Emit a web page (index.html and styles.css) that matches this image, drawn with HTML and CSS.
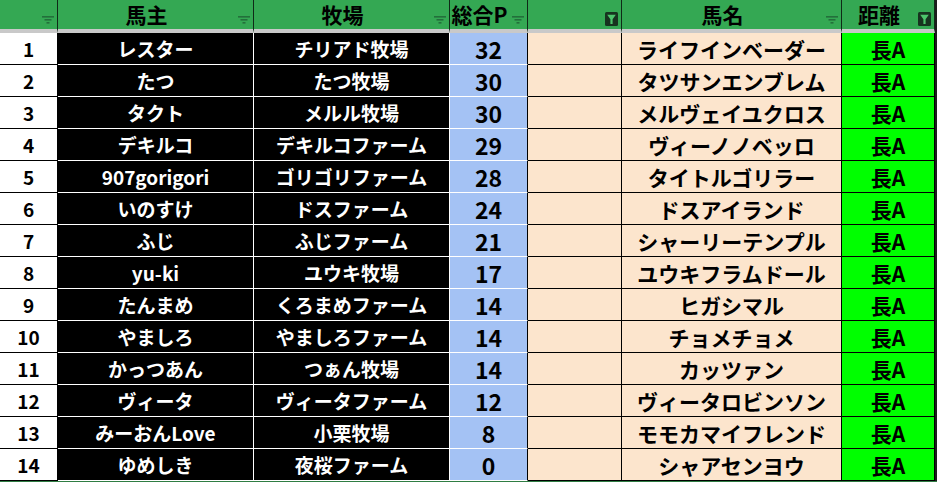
FILE: index.html
```html
<!DOCTYPE html>
<html lang="ja">
<head>
<meta charset="utf-8">
<title>馬主一覧</title>
<link rel="stylesheet" href="styles.css">
</head>
<body>
<div class="sheet">
  <div class="row head">
    <div class="hc c-no"><span class="ht"></span><svg class="fi" viewBox="0 0 12 8"><rect x="0" y="0" width="12" height="1.6"/><rect x="2.5" y="3" width="7" height="1.6"/><rect x="4.5" y="6" width="3" height="1.6"/></svg></div>
    <div class="hc c-owner"><span class="ht">馬主</span><svg class="fi" viewBox="0 0 12 8"><rect x="0" y="0" width="12" height="1.6"/><rect x="2.5" y="3" width="7" height="1.6"/><rect x="4.5" y="6" width="3" height="1.6"/></svg></div>
    <div class="hc c-farm"><span class="ht">牧場</span><svg class="fi" viewBox="0 0 12 8"><rect x="0" y="0" width="12" height="1.6"/><rect x="2.5" y="3" width="7" height="1.6"/><rect x="4.5" y="6" width="3" height="1.6"/></svg></div>
    <div class="hc c-pt"><span class="ht">総合P</span><svg class="fi" viewBox="0 0 12 8"><rect x="0" y="0" width="12" height="1.6"/><rect x="2.5" y="3" width="7" height="1.6"/><rect x="4.5" y="6" width="3" height="1.6"/></svg></div>
    <div class="hc c-blank"><span class="ht"></span><svg class="fa" viewBox="0 0 13 14"><rect width="13" height="14" rx="1.5"/><path d="M2.2 2.8h8.6l-3.2 4.4v4.8h-2.2v-4.8z"/></svg></div>
    <div class="hc c-horse"><span class="ht">馬名</span><svg class="fi" viewBox="0 0 12 8"><rect x="0" y="0" width="12" height="1.6"/><rect x="2.5" y="3" width="7" height="1.6"/><rect x="4.5" y="6" width="3" height="1.6"/></svg></div>
    <div class="hc c-dist"><span class="ht">距離</span><svg class="fa" viewBox="0 0 13 14"><rect width="13" height="14" rx="1.5"/><path d="M2.2 2.8h8.6l-3.2 4.4v4.8h-2.2v-4.8z"/></svg></div>
  </div>

  <div class="row"><div class="c c-no">1</div><div class="c c-owner">レスター</div><div class="c c-farm">チリアド牧場</div><div class="c c-pt">32</div><div class="c c-blank"></div><div class="c c-horse">ライフインベーダー</div><div class="c c-dist">長A</div></div>
  <div class="row"><div class="c c-no">2</div><div class="c c-owner">たつ</div><div class="c c-farm">たつ牧場</div><div class="c c-pt">30</div><div class="c c-blank"></div><div class="c c-horse">タツサンエンブレム</div><div class="c c-dist">長A</div></div>
  <div class="row"><div class="c c-no">3</div><div class="c c-owner">タクト</div><div class="c c-farm">メルル牧場</div><div class="c c-pt">30</div><div class="c c-blank"></div><div class="c c-horse">メルヴェイユクロス</div><div class="c c-dist">長A</div></div>
  <div class="row"><div class="c c-no">4</div><div class="c c-owner">デキルコ</div><div class="c c-farm">デキルコファーム</div><div class="c c-pt">29</div><div class="c c-blank"></div><div class="c c-horse">ヴィーノノベッロ</div><div class="c c-dist">長A</div></div>
  <div class="row"><div class="c c-no">5</div><div class="c c-owner">907gorigori</div><div class="c c-farm">ゴリゴリファーム</div><div class="c c-pt">28</div><div class="c c-blank"></div><div class="c c-horse">タイトルゴリラー</div><div class="c c-dist">長A</div></div>
  <div class="row"><div class="c c-no">6</div><div class="c c-owner">いのすけ</div><div class="c c-farm">ドスファーム</div><div class="c c-pt">24</div><div class="c c-blank"></div><div class="c c-horse">ドスアイランド</div><div class="c c-dist">長A</div></div>
  <div class="row"><div class="c c-no">7</div><div class="c c-owner">ふじ</div><div class="c c-farm">ふじファーム</div><div class="c c-pt">21</div><div class="c c-blank"></div><div class="c c-horse">シャーリーテンプル</div><div class="c c-dist">長A</div></div>
  <div class="row"><div class="c c-no">8</div><div class="c c-owner">yu-ki</div><div class="c c-farm">ユウキ牧場</div><div class="c c-pt">17</div><div class="c c-blank"></div><div class="c c-horse">ユウキフラムドール</div><div class="c c-dist">長A</div></div>
  <div class="row"><div class="c c-no">9</div><div class="c c-owner">たんまめ</div><div class="c c-farm">くろまめファーム</div><div class="c c-pt">14</div><div class="c c-blank"></div><div class="c c-horse">ヒガシマル</div><div class="c c-dist">長A</div></div>
  <div class="row"><div class="c c-no">10</div><div class="c c-owner">やましろ</div><div class="c c-farm">やましろファーム</div><div class="c c-pt">14</div><div class="c c-blank"></div><div class="c c-horse">チョメチョメ</div><div class="c c-dist">長A</div></div>
  <div class="row"><div class="c c-no">11</div><div class="c c-owner">かっつあん</div><div class="c c-farm">つぁん牧場</div><div class="c c-pt">14</div><div class="c c-blank"></div><div class="c c-horse">カッツァン</div><div class="c c-dist">長A</div></div>
  <div class="row"><div class="c c-no">12</div><div class="c c-owner">ヴィータ</div><div class="c c-farm">ヴィータファーム</div><div class="c c-pt">12</div><div class="c c-blank"></div><div class="c c-horse">ヴィータロビンソン</div><div class="c c-dist">長A</div></div>
  <div class="row"><div class="c c-no">13</div><div class="c c-owner">みーおんLove</div><div class="c c-farm">小栗牧場</div><div class="c c-pt">8</div><div class="c c-blank"></div><div class="c c-horse">モモカマイフレンド</div><div class="c c-dist">長A</div></div>
  <div class="row"><div class="c c-no">14</div><div class="c c-owner">ゆめしき</div><div class="c c-farm">夜桜ファーム</div><div class="c c-pt">0</div><div class="c c-blank"></div><div class="c c-horse">シャアセンヨウ</div><div class="c c-dist">長A</div></div>
</div>
</body>
</html>
```

FILE: styles.css
```css
html, body {
  margin: 0;
  padding: 0;
  background: #ffffff;
}

.sheet {
  width: 937px;
  background: #1c1c1c;
  border-bottom: 1px solid #2f7d43;
  font-family: "Noto Sans CJK JP", "Noto Sans", sans-serif;
  font-weight: 700;
  color: #000;
}

.row {
  display: grid;
  grid-template-columns: 58px 196px 196px 78px 94px 220px 93px;
  height: 32px;
}

.row.head {
  height: 33px;
}

.hc {
  position: relative;
  box-sizing: border-box;
  background: #34a853;
  border-right: 1px solid #0f2a17;
  border-bottom: 4px solid #c9c9c9;
  display: flex;
  align-items: center;
  justify-content: center;
  padding-right: 18px;
  font-size: 21px;
  line-height: 1.2;
  overflow: visible;
}

.ht {
  white-space: nowrap;
}

.fi {
  position: absolute;
  right: 3px;
  bottom: 5px;
  width: 12px;
  height: 8px;
  fill: #23703b;
}

.fa {
  position: absolute;
  right: 3px;
  top: 12px;
  width: 13px;
  height: 14px;
}

.fa rect {
  fill: #17331f;
}

.fa path {
  fill: #4cc46b;
}

.c {
  box-sizing: border-box;
  border-right: 1px solid #000;
  border-bottom: 1px solid #000;
  display: flex;
  align-items: center;
  justify-content: center;
  white-space: nowrap;
  line-height: 1.2;
  padding-top: 2px;
}

.c.c-no {
  background: #ffffff;
  font-size: 19px;
}

.c.c-owner,
.c.c-farm {
  background: #000000;
  color: #ffffff;
  font-size: 19px;
  border-right-color: #ffffff;
  border-bottom-color: #ffffff;
}

.c.c-pt {
  background: #a4c2f4;
  font-size: 23px;
  border-bottom-color: #ffffff;
}

.c.c-blank {
  background: #fce5cd;
}

.c.c-horse {
  background: #fce5cd;
  font-size: 21px;
}

.c.c-dist {
  background: #00ff00;
  font-size: 21px;
}
```
